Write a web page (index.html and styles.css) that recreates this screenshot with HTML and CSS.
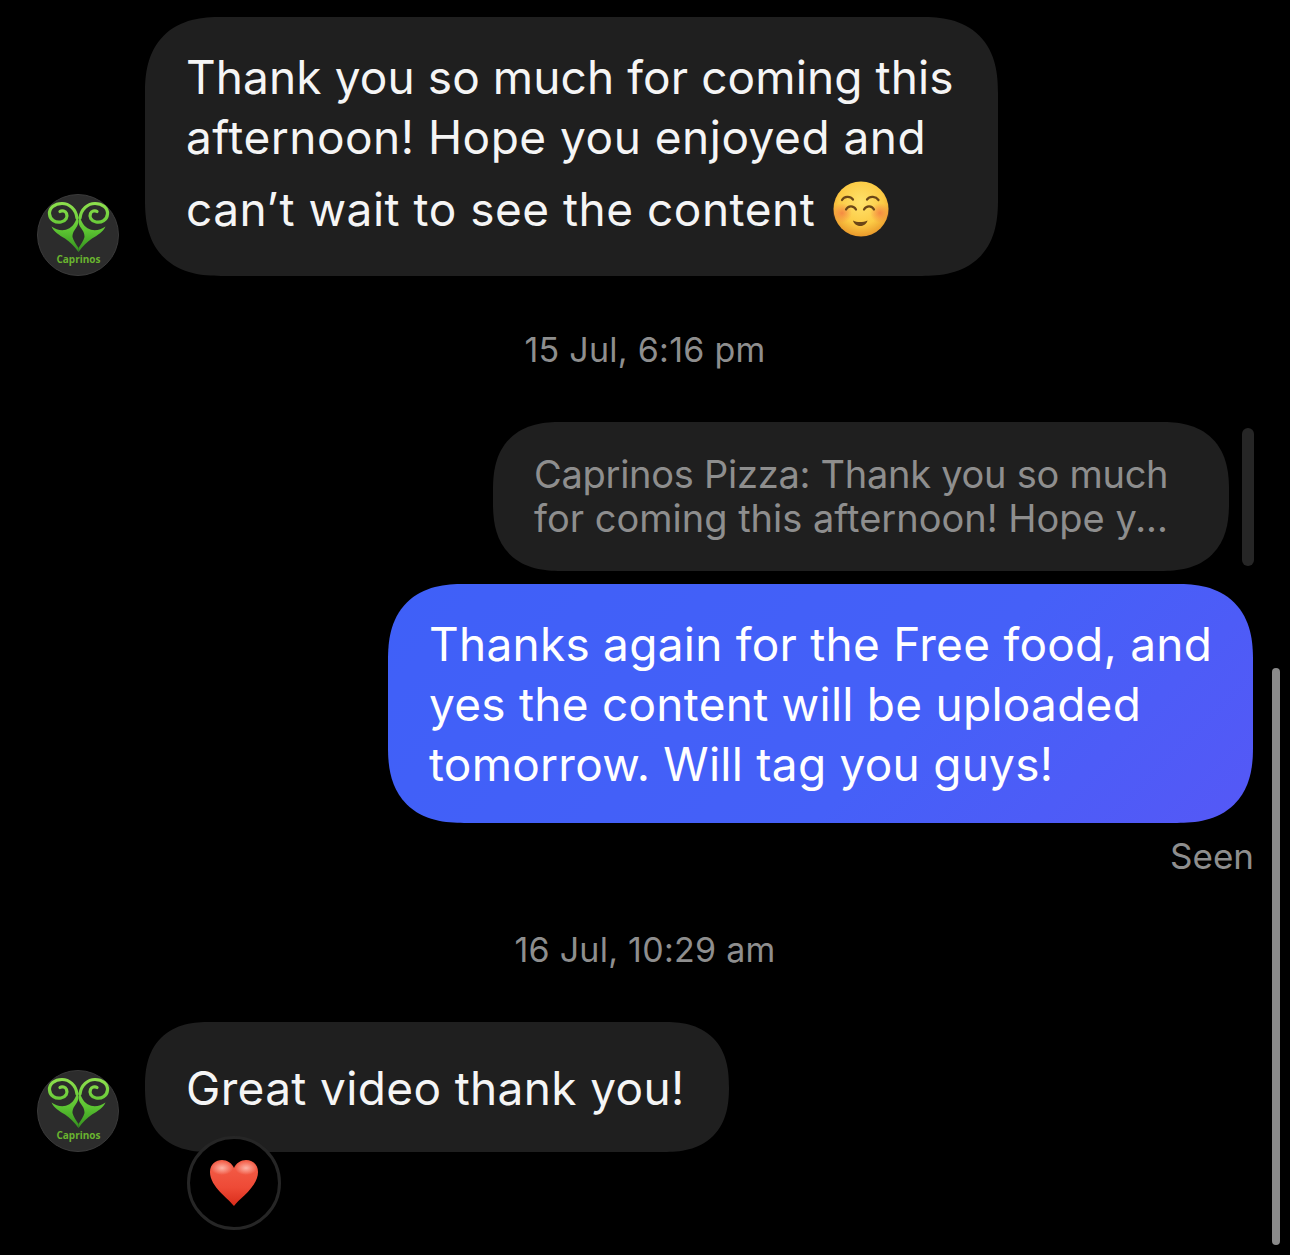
FILE: index.html
```html
<!DOCTYPE html>
<html lang="en">
<head>
    <meta charset="UTF-8">
    <title>Messages</title>
    <link rel="stylesheet" href="styles.css">
</head>
<body>
    <svg class="defs" width="0" height="0">
        <defs>
            <linearGradient id="leaf" gradientUnits="userSpaceOnUse" x1="0" y1="8" x2="0" y2="60">
                <stop offset="0" stop-color="#8fe04e"/>
                <stop offset="0.55" stop-color="#5cc432"/>
                <stop offset="1" stop-color="#2f8a1c"/>
            </linearGradient>
            <g id="logo-half">
                <path d="M40 24C39 15 32 9.5 25 9.5 17.5 9.5 12 14 12.5 20 13 26 18.5 29 24 28 29 27 31 23 29.5 19.5 28.5 17 25 16 23 17.5" fill="none" stroke="url(#leaf)" stroke-width="3.2" stroke-linecap="round"/>
                <path d="M14.5 32.5C22 38 33 38 38 28 39 26 40 24 40 22 42 26 42 30 39 34 36 38 35.5 40 35.5 43 36.5 47 39 50 41.5 54L41.5 58C37 52 33 48 28 44.5 22 41 17 38 14.5 32.5Z" fill="url(#leaf)"/>
            </g>
            <symbol id="logo" viewBox="0 0 82 82">
                <circle cx="41" cy="41" r="40.5" fill="#2c2c2c" stroke="#3a3a3a"/>
                <use href="#logo-half"/>
                <use href="#logo-half" transform="matrix(-1 0 0 1 83 0)"/>
                <text x="41.5" y="69" class="logo-text">Caprinos</text>
            </symbol>
        </defs>
    </svg>

    <section class="row">
        <svg class="avatar"><use href="#logo"/></svg>
        <div class="bubble bubble-first">
            <div class="line line-tight">Thank you so much for coming this</div>
            <div class="line">afternoon! Hope you enjoyed and</div>
            <div class="line line-emoji">can’t wait to see the content
                <svg class="emoji" viewBox="0 0 56 56">
                    <defs>
                        <radialGradient id="face" cx="0.5" cy="0.38" r="0.62">
                            <stop offset="0" stop-color="#ffe26b"/>
                            <stop offset="0.65" stop-color="#fccb45"/>
                            <stop offset="1" stop-color="#e9992b"/>
                        </radialGradient>
                        <radialGradient id="blush">
                            <stop offset="0" stop-color="#f37a42" stop-opacity="0.8"/>
                            <stop offset="1" stop-color="#f37a42" stop-opacity="0"/>
                        </radialGradient>
                    </defs>
                    <circle cx="28" cy="28" r="27.5" fill="url(#face)"/>
                    <circle cx="9" cy="32" r="10" fill="url(#blush)"/>
                    <circle cx="47" cy="32" r="10" fill="url(#blush)"/>
                    <g fill="none" stroke="#6b4617" stroke-width="2.2" stroke-linecap="round">
                        <path d="M9 19C11 15.5 17 14.5 20 18.5"/>
                        <path d="M34 18.5C37 14.5 43 15.5 45.5 19"/>
                        <path d="M13 28.5C15 24.5 20.5 24 23 28.5"/>
                        <path d="M31 28.5C33.5 24 39 24.5 41 28.5"/>
                    </g>
                    <path d="M20 39.5C24 41.5 30 41.5 34.5 39.5 33.5 43.5 30 45 27.3 45 24.5 45 21 43.5 20 39.5Z" fill="#6b4617"/>
                </svg>
            </div>
        </div>
    </section>

    <div class="stamp stamp-first">15 Jul, 6:16 pm</div>

    <section class="reply">
        <div class="quote">
            <div class="quote-top">Caprinos Pizza: Thank you so much</div>
            <div>for coming this afternoon! Hope y...</div>
        </div>
        <div class="quote-bar"></div>
    </section>

    <div class="bubble bubble-own">
        <div class="line">Thanks again for the Free food, and</div>
        <div class="line">yes the content will be uploaded</div>
        <div class="line">tomorrow. Will tag you guys!</div>
    </div>
    <div class="seen">Seen</div>

    <div class="stamp stamp-second">16 Jul, 10:29 am</div>

    <section class="row">
        <svg class="avatar"><use href="#logo"/></svg>
        <div class="bubble bubble-last">
            <div class="line">Great video thank you!</div>
        </div>
    </section>
    <div class="reaction">
        <svg class="heart" viewBox="0 0 50 48">
            <defs>
                <linearGradient id="heartFill" x1="0" y1="0" x2="0" y2="1">
                    <stop offset="0" stop-color="#f4604a"/>
                    <stop offset="0.6" stop-color="#ee4a36"/>
                    <stop offset="1" stop-color="#d92c1a"/>
                </linearGradient>
                <radialGradient id="heartShine">
                    <stop offset="0" stop-color="#ffc4b8" stop-opacity="0.85"/>
                    <stop offset="1" stop-color="#ffc4b8" stop-opacity="0"/>
                </radialGradient>
            </defs>
            <path d="M25 47C20 40 1 28 1 13 1 5 7 1 13 1 18 1 23 4 25 9 27 4 32 1 37 1 43 1 49 5 49 13 49 28 30 40 25 47Z" fill="url(#heartFill)"/>
            <ellipse cx="13" cy="9" rx="11" ry="7" fill="url(#heartShine)"/>
            <ellipse cx="37" cy="9" rx="11" ry="7" fill="url(#heartShine)"/>
        </svg>
    </div>

    <div class="scrollbar"></div>
</body>
</html>
```
FILE: styles.css
```css
body {
    margin: 0;
    height: 1255px;
    overflow: hidden;
    background-color: #000;
    color: #f5f5f5;
    font-family: "Inter", "Liberation Sans", sans-serif;
    font-size: 46px;
    position: relative;
}
.defs {
    position: absolute;
}
.logo-text {
    fill: #69b42f;
    font-family: "Open Sans", sans-serif;
    font-size: 10px;
    font-weight: 700;
    text-anchor: middle;
}
.row {
    display: flex;
    align-items: flex-end;
    gap: 26px;
    padding-left: 37px;
}
.avatar {
    width: 82px;
    height: 82px;
    flex: none;
}
.bubble {
    background-color: #1f1f1f;
    box-sizing: border-box;
    border-radius: 76px;
    corner-shape: superellipse(1.3);
}
.line {
    height: 60px;
    line-height: 60px;
    white-space: nowrap;
}
.line-emoji {
    display: flex;
    align-items: center;
    gap: 18px;
    height: 84px;
    line-height: 84px;
}
.line-tight {
    letter-spacing: 0.1px;
}
.emoji {
    width: 56px;
    height: 56px;
    flex: none;
}
.bubble-first {
    width: 853px;
    height: 259px;
    margin-top: 17px;
    padding: 30px 41px 0;
    letter-spacing: 0.5px;
}
.stamp {
    text-align: center;
    font-size: 34px;
    line-height: 40px;
    letter-spacing: 0.27px;
    color: #8e8e8e;
}
.stamp-first {
    margin-top: 54px;
}
.reply {
    display: flex;
    justify-content: flex-end;
    align-items: center;
    gap: 13px;
    margin-top: 52px;
    padding-right: 36px;
}
.quote {
    width: 736px;
    height: 149px;
    box-sizing: border-box;
    padding: 30px 41px 0;
    border-radius: 68px;
    corner-shape: superellipse(1.3);
    background-color: #1f1f1f;
    color: #8e8e8e;
    font-size: 38px;
    line-height: 44px;
    white-space: nowrap;
}
.quote-top {
    letter-spacing: -0.27px;
}
.quote-bar {
    width: 12px;
    height: 138px;
    border-radius: 6px;
    background-color: #262626;
}
.bubble-own {
    width: 865px;
    height: 239px;
    margin: 13px 37px 0 auto;
    padding: 30px 41px 0;
    background: linear-gradient(135deg, #3f60f8, #4560f8 60%, #5558f6);
    color: #fff;
    letter-spacing: 0.25px;
}
.seen {
    margin: 13px 36px 0 0;
    text-align: right;
    font-size: 35px;
    line-height: 40px;
    color: #8e8e8e;
}
.stamp-second {
    margin-top: 54px;
}
.stamp-second + .row {
    margin-top: 52px;
}
.bubble-last {
    width: 584px;
    height: 130px;
    padding: 36px 41px 0;
    letter-spacing: 0.35px;
}
.reaction {
    display: flex;
    align-items: center;
    justify-content: center;
    position: relative;
    width: 88px;
    height: 88px;
    margin: -16px 0 0 187px;
    border: 3px solid #262626;
    border-radius: 50%;
    background-color: #000;
}
.heart {
    width: 50px;
    height: 48px;
}
.scrollbar {
    position: absolute;
    top: 668px;
    left: 1272px;
    width: 8px;
    height: 577px;
    border-radius: 4px;
    background-color: #8a8a8a;
}
```
